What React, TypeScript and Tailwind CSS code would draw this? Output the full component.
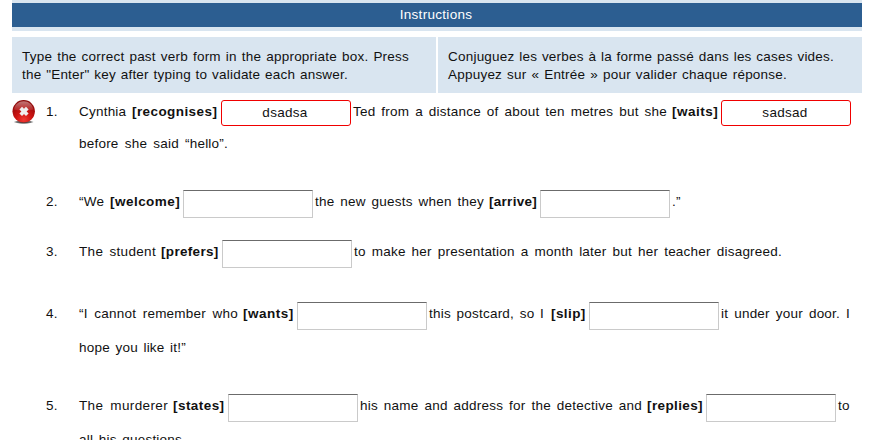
import React from 'react';

type SegmentProps = { className: string; children: React.ReactNode };

function Run({ className, children }: SegmentProps) {
  return (
    <span className={`mt-[3px] block shrink-0 whitespace-nowrap leading-[18px] [text-align-last:justify] ${className}`}>
      {children}
    </span>
  );
}

function Verb({ className, children }: SegmentProps) {
  return (
    <b className={`mt-[3px] block shrink-0 whitespace-nowrap font-bold leading-[18px] ${className}`}>{children}</b>
  );
}

function Blank() {
  return (
    <input
      aria-label="answer"
      className="block h-7 w-[130px] shrink-0 border border-[#cacaca] border-t-[#6b6b6b] bg-white px-2 text-center outline-none"
    />
  );
}

function WrongAnswer({ value }: { value: string }) {
  return (
    <input
      aria-label="answer"
      defaultValue={value}
      className="block h-[26px] w-[130px] shrink-0 rounded-[3px] border border-[#f00000] bg-white pb-px pl-1.5 pr-2 text-center leading-[18px] tracking-[0.3px] outline-none"
    />
  );
}

function ErrorIcon() {
  return (
    <svg className="block h-6 w-6" viewBox="0 0 24 24" aria-hidden="true">
      <defs>
        <radialGradient id="ball" cx="50%" cy="88%" r="85%">
          <stop offset="0" stopColor="#f03a34" />
          <stop offset="0.4" stopColor="#cf1512" />
          <stop offset="0.75" stopColor="#a50c0c" />
          <stop offset="1" stopColor="#8a0a0a" />
        </radialGradient>
        <linearGradient id="shine" x1="0" y1="0" x2="0" y2="1">
          <stop offset="0" stopColor="#fff" stopOpacity="0.45" />
          <stop offset="1" stopColor="#fff" stopOpacity="0.06" />
        </linearGradient>
        <radialGradient id="shade">
          <stop offset="0" stopColor="#000" stopOpacity="0.95" />
          <stop offset="0.7" stopColor="#222" stopOpacity="0.6" />
          <stop offset="1" stopColor="#555" stopOpacity="0" />
        </radialGradient>
      </defs>
      <ellipse cx="11.7" cy="22" rx="10.4" ry="2" fill="url(#shade)" />
      <circle cx="11.7" cy="11.3" r="11.2" fill="url(#ball)" />
      <path d="M2 9.6C3 4.200 7 1.200 11.700 1.200s8.700 3 9.700 8.400c-5 1.800-14.400 1.800-19.400 0z" fill="url(#shine)" />
      <path d="M8.700 8.100l6.600 6.600M15.300 8.100l-6.600 6.600" stroke="#efefef" strokeWidth="3.700" />
    </svg>
  );
}

function Question({ number, className, icon, children }: { number: string; className: string; icon?: React.ReactNode; children: React.ReactNode }) {
  return (
    <li className={`flex items-start pl-3 ${className}`}>
      <div className="w-[34px] shrink-0">{icon}</div>
      <span className="mt-[3px] w-[33px] shrink-0 leading-[18px]">{number}</span>
      <div>{children}</div>
    </li>
  );
}

export default function App() {
  return (
    <main className="h-[440px] w-[877px] overflow-hidden bg-white font-['Liberation_Sans',Arial,sans-serif] text-[13.5px] tracking-[0.22px] text-[#111]">
      <header className="mx-3 w-[850px] border-t-[3px] border-b-4 border-[#d9e5f0] bg-[#2c5e91] pr-[2px] text-center leading-6 tracking-[0.3px] text-white">
        Instructions
      </header>
      <section className="mx-3 mt-1.5 flex h-14 w-[850px] gap-0.5">
        <div className="w-[424px] bg-[#d9e5f0] pl-[10px] pt-[8px]">
          <Run className="w-[387px]">Type the correct past verb form in the appropriate box. Press</Run>
          <Run className="!mt-0 w-[326px]">the "Enter" key after typing to validate each answer.</Run>
        </div>
        <div className="w-[424px] bg-[#d9e5f0] pl-[10px] pt-[8px]">
          <Run className="w-[386px]">Conjuguez les verbes à la forme passé dans les cases vides.</Run>
          <Run className="!mt-0 w-[339px]">Appuyez sur « Entrée » pour valider chaque réponse.</Run>
        </div>
      </section>

      <ol className="mt-[7px]">
        <Question number="1." className="h-[90px]" icon={<ErrorIcon />}>
          <div className="flex h-8">
            <Run className="w-[53px]">Cynthia</Run>
            <Verb className="w-[89px] tracking-[0.42px]">[recognises]</Verb>
            <WrongAnswer value="dsadsa" />
            <Run className="ml-[2px] mr-[5px] w-[314px]">Ted from a distance of about ten metres but she</Run>
            <Verb className="w-[49px] tracking-[0.48px]">[waits]</Verb>
            <WrongAnswer value="sadsad" />
          </div>
          <Run className="w-[149px]">before she said “hello”.</Run>
        </Question>

        <Question number="2." className="h-[50px]">
          <div className="flex">
            <Run className="w-[31px]">“We</Run>
            <Verb className="w-[73px] tracking-[0.47px]">[welcome]</Verb>
            <Blank />
            <Run className="ml-[2px] mr-[5px] w-[169px]">the new guests when they</Run>
            <Verb className="w-[51px] tracking-[0.28px]">[arrive]</Verb>
            <Blank />
            <Run className="ml-[2px] w-[12px]">.”</Run>
          </div>
        </Question>

        <Question number="3." className="h-[62px]">
          <div className="flex">
            <Run className="mr-[5px] w-[77px] tracking-[0.32px]">The student</Run>
            <Verb className="w-[61px] tracking-[0.32px]">[prefers]</Verb>
            <Blank />
            <Run className="ml-[2px] w-[428px]">to make her presentation a month later but her teacher disagreed.</Run>
          </div>
        </Question>

        <Question number="4." className="h-[92px]">
          <div className="flex h-[34px]">
            <Run className="mr-[5px] w-[159px]">“I cannot remember who</Run>
            <Verb className="w-[54px] tracking-[0.52px]">[wants]</Verb>
            <Blank />
            <Run className="ml-[2px] mr-[7px] w-[115px]">this postcard, so I</Run>
            <Verb className="w-[38px] tracking-[0.42px]">[slip]</Verb>
            <Blank />
            <Run className="ml-[2px] w-[129px]">it under your door. I</Run>
          </div>
          <Run className="w-[107px]">hope you like it!”</Run>
        </Question>

        <Question number="5." className="h-[60px]">
          <div className="flex h-[34px]">
            <Run className="mr-[5px] w-[89px] tracking-[0.36px]">The murderer</Run>
            <Verb className="w-[55px] tracking-[0.44px]">[states]</Verb>
            <Blank />
            <Run className="ml-[2px] mr-[5px] w-[282px]">his name and address for the detective and</Run>
            <Verb className="w-[59px] tracking-[0.38px]">[replies]</Verb>
            <Blank />
            <Run className="ml-[2px] w-[14px]">to</Run>
          </div>
          <Run className="w-[107px]">all his questions.</Run>
        </Question>
      </ol>
    </main>
  );
}
